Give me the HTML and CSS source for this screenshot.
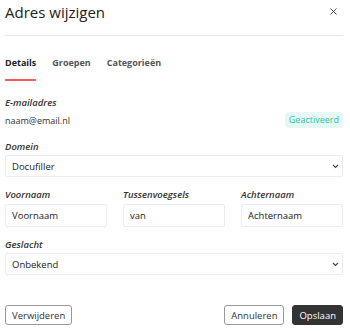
FILE: index.html
```html
<!DOCTYPE html>
<html lang="nl">
<head>
    <meta charset="UTF-8">
    <meta name="viewport" content="width=device-width, initial-scale=1.0">
    <title>Adres wijzigen</title>
    <link rel="stylesheet" href="styles.css">
</head>
<body>
    <div class="modal">
        <div class="modal-header">
            <h2 class="modal-title">Adres wijzigen</h2>
            <button class="close-button" aria-label="Sluiten">
                <svg width="7" height="7" viewBox="0 0 7 7"><path d="M0.5 0.5L6.5 6.5M6.5 0.5L0.5 6.5" stroke="#555" stroke-width="1"/></svg>
            </button>
        </div>

        <div class="tabs">
            <span class="tab active">Details</span>
            <span class="tab">Groepen</span>
            <span class="tab">Categorieën</span>
        </div>

        <div class="field field-email">
            <label class="field-label">E-mailadres</label>
            <div class="email-row">
                <span class="email-value">naam@email.nl</span>
                <span class="badge">Geactiveerd</span>
            </div>
        </div>

        <div class="field">
            <label class="field-label" for="domein">Domein</label>
            <div class="select-wrap">
                <select id="domein" class="select">
                    <option>Docufiller</option>
                </select>
                <svg class="chevron" width="7" height="5" viewBox="0 0 7 5"><path d="M1 1L3.5 3.5L6 1" fill="none" stroke="#444" stroke-width="1.1"/></svg>
            </div>
        </div>

        <div class="field name-row">
            <div class="name-col">
                <label class="field-label" for="voornaam">Voornaam</label>
                <input id="voornaam" class="input" type="text" value="Voornaam">
            </div>
            <div class="name-col">
                <label class="field-label" for="tussen">Tussenvoegsels</label>
                <input id="tussen" class="input" type="text" value="van">
            </div>
            <div class="name-col">
                <label class="field-label" for="achternaam">Achternaam</label>
                <input id="achternaam" class="input" type="text" value="Achternaam">
            </div>
        </div>

        <div class="field">
            <label class="field-label" for="geslacht">Geslacht</label>
            <div class="select-wrap">
                <select id="geslacht" class="select">
                    <option>Onbekend</option>
                </select>
                <svg class="chevron" width="7" height="5" viewBox="0 0 7 5"><path d="M1 1L3.5 3.5L6 1" fill="none" stroke="#444" stroke-width="1.1"/></svg>
            </div>
        </div>

        <div class="modal-footer">
            <button class="btn btn-outline">Verwijderen</button>
            <div class="footer-right">
                <button class="btn btn-outline">Annuleren</button>
                <button class="btn btn-dark">Opslaan</button>
            </div>
        </div>
    </div>
</body>
</html>
```

FILE: styles.css
```css
body {
    margin: 0;
    background-color: #fff;
    font-family: "Open Sans", Arial, sans-serif;
    color: #333;
}
.modal {
    padding: 0 7px 0 5px;
}
.modal-header {
    display: flex;
    justify-content: space-between;
    align-items: flex-start;
    height: 35px;
    border-bottom: 1px solid #e6e6e6;
}
.modal-title {
    margin: 0;
    font-size: 15px;
    font-weight: 400;
    line-height: 24px;
    color: #222;
}
.close-button {
    background: none;
    border: none;
    padding: 0;
    margin: 8px 6px 0 0;
    width: 7px;
    height: 7px;
    cursor: pointer;
    display: flex;
}
.tabs {
    display: flex;
    gap: 16px;
    margin-top: 20px;
}
.tab {
    font-size: 9px;
    font-weight: 700;
    line-height: 14px;
    color: #555;
    padding-bottom: 9px;
    border-bottom: 2px solid transparent;
}
.tab.active {
    color: #222;
    border-bottom-color: #f25c5c;
}
.field {
    margin-top: 11px;
}
.field-email {
    margin-top: 15px;
    margin-bottom: 12px;
}
.field-email + .field {
    margin-top: 0;
}
.field-label {
    display: block;
    font-size: 9.5px;
    font-style: italic;
    font-weight: 600;
    line-height: 14px;
    color: #333;
    margin-bottom: 1px;
}
.email-row {
    display: flex;
    justify-content: space-between;
    align-items: center;
    margin-top: 2px;
    height: 16px;
}
.email-value {
    font-size: 9px;
}
.badge {
    background-color: #e5f8f3;
    color: #2cc8a5;
    font-size: 9px;
    line-height: 16px;
    padding: 0 4px;
    border-radius: 4px;
}
.select-wrap {
    position: relative;
}
.select {
    display: block;
    appearance: none;
    -webkit-appearance: none;
    width: 100%;
    height: 22px;
    margin: 0;
    border: 1px solid #ececec;
    border-radius: 2px;
    background: #fff;
    padding: 0 6px;
    font-family: inherit;
    font-size: 9.5px;
    color: #222;
}
.chevron {
    position: absolute;
    right: 4px;
    top: 9px;
}
.name-row {
    display: flex;
    gap: 16px;
}
.name-col {
    flex: 1;
    display: flex;
    flex-direction: column;
}
.name-col .field-label {
    margin-bottom: 2px;
}
.input {
    display: block;
    height: 23px;
    margin: 0;
    box-sizing: border-box;
    border: 1px solid #ececec;
    border-radius: 2px;
    padding: 0 6px;
    font-family: inherit;
    font-size: 9.5px;
    color: #222;
    width: 100%;
}
.modal-footer {
    display: flex;
    justify-content: space-between;
    margin-top: 30px;
}
.footer-right {
    display: flex;
    gap: 8px;
}
.btn {
    height: 20px;
    padding: 0 6px;
    font-family: inherit;
    font-size: 9.5px;
    border-radius: 3px;
    cursor: pointer;
}
.btn-outline {
    background: #fff;
    border: 1px solid #999;
    color: #333;
}
.btn-dark {
    background: #333;
    border: 1px solid #333;
    color: #fff;
}
```
